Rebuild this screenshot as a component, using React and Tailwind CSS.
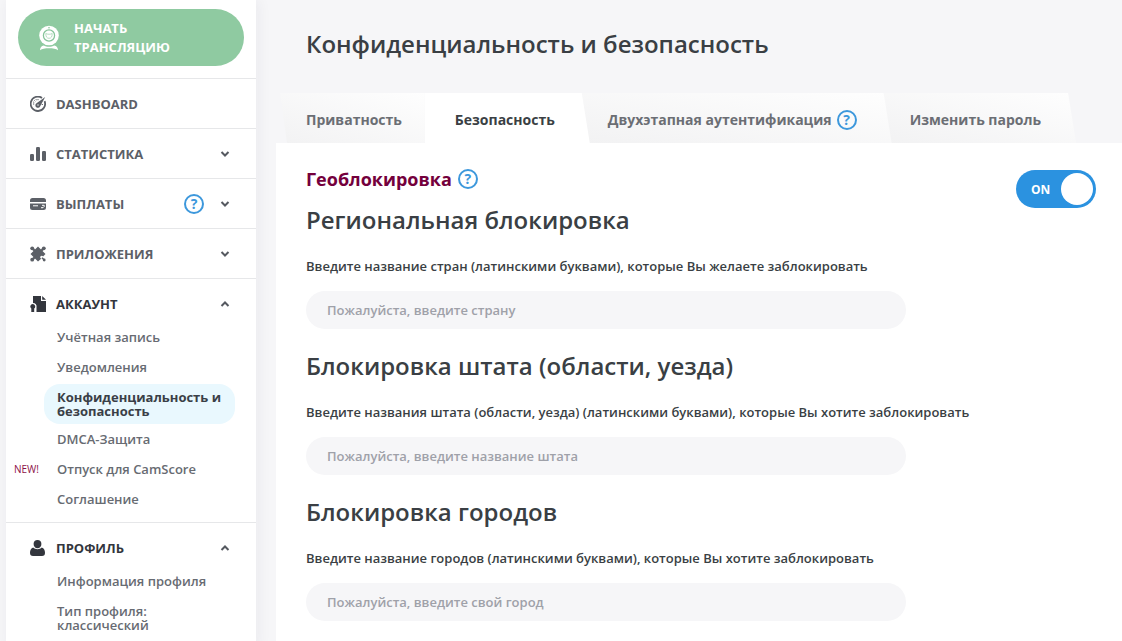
import { useState } from "react";
import clsx from "clsx";

/* ================= ICONS ================= */

const CameraIcon = () => (
  <svg viewBox="0 0 20 26" className="w-5 h-[26px] shrink-0" fill="none" aria-hidden="true">
    <circle cx="10" cy="10.500" r="9.800" fill="#fff" />
    <circle cx="10" cy="10.500" r="5.600" stroke="#86c49a" strokeWidth="1.300" />
    <path d="M6.800 8.500c1.800 1 4.600 1 6.400 0 0 3.200-1 4.800-3.200 4.800s-3.200-1.600-3.200-4.800z" stroke="#a5d5b4" strokeWidth=".8" />
    <circle cx="10" cy="2.800" r=".8" fill="#86c49a" />
    <path d="M1 25.200c0-2.700 1.500-4.500 3.700-4.800 3 1.900 7.600 1.900 10.600 0 2.200.3 3.700 2.100 3.700 4.800-2-1.500-5-1.900-9-1.900s-7 .4-9 1.900z" fill="#fff" />
  </svg>
);

const DashboardIcon = () => (
  <svg viewBox="0 0 16 16" className="w-4 h-4" fill="none" stroke="currentColor" aria-hidden="true">
    <path d="M12 1.900A7.200 7.200 0 1 0 14.600 5.200" strokeWidth="1.800" />
    <path d="M3 8h1.200M8 3v1.200M4.400 4.400l.9.900M6 3.200l.4 1M3.200 6l1 .4M12.900 8.500h-1.200" strokeWidth="1" />
    <path d="M15.200 1L10.200 10.200a2.500 2.500 0 1 1-3.700-3z" fill="currentColor" stroke="none" />
    <circle cx="8" cy="9" r=".7" fill="#fff" stroke="none" />
  </svg>
);

const StatsIcon = () => (
  <svg viewBox="0 0 16 16" className="w-4 h-4" fill="currentColor" aria-hidden="true">
    <rect x="0" y="8" width="4" height="7" rx="1.200" />
    <rect x="6" y="1" width="4" height="14" rx="1.200" />
    <rect x="12" y="5" width="4" height="10" rx="1.200" />
  </svg>
);

const PayoutIcon = () => (
  <svg viewBox="0 0 16 16" className="w-4 h-4" aria-hidden="true">
    <path d="M2.500 2h11A2.500 2.500 0 0 1 16 4.500V6H0V4.500A2.500 2.500 0 0 1 2.500 2zM0 7.500h16v4a2.500 2.500 0 0 1-2.500 2.500h-11A2.500 2.500 0 0 1 0 11.500z" fill="currentColor" />
    <path d="M3 9.800h5M12 9.300h2.200v1.200l-1.200 1.200h-2" fill="none" stroke="#fff" strokeWidth="1" />
  </svg>
);

const AppsIcon = () => (
  <svg viewBox="0 0 16 16" className="w-4 h-4" fill="currentColor" aria-hidden="true">
    <path d="M8 .5L15.500 8l-2.400 2.400c-.6-1-2.200-1-2.700 0-.5.900-.2 1.900.8 2.300L8 15.500.5 8z" />
    <circle cx="2.200" cy="2.300" r="1.900" />
    <circle cx="13.800" cy="2.300" r="1.900" />
    <circle cx="2.200" cy="13.700" r="1.900" />
    <path d="M2 2l4 4M14 2l-4 4M2 14l4-4" stroke="currentColor" strokeWidth="2.400" />
    <circle cx="14.200" cy="14" r="1.400" />
    <path d="M12 11.800l2 2" stroke="currentColor" strokeWidth="1.600" />
  </svg>
);

const AccountIcon = () => (
  <svg viewBox="0 0 16 16" className="w-4 h-4" fill="currentColor" aria-hidden="true">
    <path d="M3 0h8v5h5v11H6.500v-4.600A3.600 3.600 0 0 0 3 6.900z" />
    <path d="M12.200 0L16 3.800h-3.800z" />
    <path d="M2.700 8a2.500 2.500 0 0 1 1.500 4.500V16H1.300v-3.500A2.500 2.500 0 0 1 2.700 8z" />
  </svg>
);

const ProfileIcon = () => (
  <svg viewBox="0 0 16 16" className="w-4 h-4" fill="currentColor" aria-hidden="true">
    <path d="M7.500 0c2.400 0 3.900 1.500 3.900 3.900S9.800 8.200 7.500 8.200 3.600 6.300 3.600 3.900 5.100 0 7.500 0z" />
    <path d="M3.200 7.600c2 2.200 6.600 2.200 8.600 0C14 8.400 15 10.300 15 12.800c0 2.200-1 3.200-3 3.200H3c-2 0-3-1-3-3.200 0-2.500 1-4.400 3.200-5.200z" />
  </svg>
);

const Chevron = ({ up }) => (
  <svg
    viewBox="0 0 10 10"
    className={clsx("w-2.5 h-2.5 text-[#555960]", up && "rotate-180")}
    fill="none"
    stroke="currentColor"
    strokeWidth="2"
    aria-hidden="true"
  >
    <path d="M1.500 3L5 6.500 8.500 3" />
  </svg>
);

const Help = () => (
  <span className="flex items-center justify-center w-5 h-5 shrink-0 rounded-full border-2 border-[#3d98dc] text-[#3d98dc] text-sm leading-none font-bold">
    ?
  </span>
);

/* ================= DATA ================= */

const menu = [
  { title: "DASHBOARD", icon: DashboardIcon },
  { title: "СТАТИСТИКА", icon: StatsIcon, expandable: true },
  { title: "ВЫПЛАТЫ", icon: PayoutIcon, expandable: true, help: true },
  { title: "ПРИЛОЖЕНИЯ", icon: AppsIcon, expandable: true },
  {
    title: "АККАУНТ",
    icon: AccountIcon,
    expandable: true,
    links: [
      { label: "Учётная запись" },
      { label: "Уведомления" },
      { label: "Конфиденциальность и безопасность", active: true },
      { label: "DMCA-Защита" },
      { label: "Отпуск для CamScore", isNew: true },
      { label: "Соглашение" }
    ]
  },
  {
    title: "ПРОФИЛЬ",
    icon: ProfileIcon,
    expandable: true,
    links: [
      { label: "Информация профиля" },
      { label: "Тип профиля: классический" }
    ]
  }
];

const fields = [
  {
    id: "country",
    title: "Региональная блокировка",
    label: "Введите название стран (латинскими буквами), которые Вы желаете заблокировать",
    placeholder: "Пожалуйста, введите страну"
  },
  {
    id: "state",
    title: "Блокировка штата (области, уезда)",
    label: "Введите названия штата (области, уезда) (латинскими буквами), которые Вы хотите заблокировать",
    placeholder: "Пожалуйста, введите название штата"
  },
  {
    id: "city",
    title: "Блокировка городов",
    label: "Введите название городов (латинскими буквами), которые Вы хотите заблокировать",
    placeholder: "Пожалуйста, введите свой город"
  }
];

const tabs = [
  { label: "Приватность", className: "pl-[30px] pr-[23px] [clip-path:polygon(4px_0,100%_0,100%_100%,11px_100%)]" },
  { label: "Безопасность", className: "z-30 pl-[30px] pr-[35px] [clip-path:polygon(0_0,calc(100%-8px)_0,100%_100%,0_100%)]" },
  { label: "Двухэтапная аутентификация", help: true, className: "z-20 -ml-2 pl-[26px] pr-[35px] [clip-path:polygon(0_0,calc(100%-8px)_0,100%_100%,0_100%)]" },
  { label: "Изменить пароль", className: "z-10 -ml-2 pl-[26px] pr-[35px] [clip-path:polygon(0_0,calc(100%-8px)_0,100%_100%,0_100%)]" }
];

/* ================= SIDEBAR ================= */

const MenuSection = ({ item }) => {
  const Icon = item.icon;
  const open = Boolean(item.links);

  return (
    <li className={clsx("border-t border-[#e6e7e9]", open && "pb-2")}>

      <button
        type="button"
        aria-expanded={item.expandable ? open : undefined}
        className={clsx(
          "flex items-center w-full pl-6 pr-[26px] text-[13px] font-bold",
          open ? "h-[43px] pt-[7px] text-[#33363d]" : "h-[49px] pt-px text-[#5c6067]"
        )}
      >
        <Icon />
        <span className="ml-2.5 mr-auto pt-0.5">{item.title}</span>
        {item.help && <span className="mr-4"><Help /></span>}
        {item.expandable && <Chevron up={open} />}
      </button>

      {open && (
        <ul>
          {item.links.map((link) => (
            <li key={link.label} className="flex items-center text-[13px] leading-[14px]">
              <span className="w-[38px] pl-2 text-[10px] text-[#8c1147]">
                {link.isNew && "NEW!"}
              </span>
              <a
                href="#"
                aria-current={link.active ? "page" : undefined}
                className={clsx(
                  "w-[191px] pl-[13px] rounded-2xl",
                  link.active
                    ? "mt-0.5 py-1.5 bg-[#e9f8fe] font-bold text-[#3a3f47]"
                    : "py-2 pr-5 font-semibold text-[#676b72]"
                )}
              >
                {link.label}
              </a>
            </li>
          ))}
        </ul>
      )}

    </li>
  );
};

const Sidebar = () => (
  <aside className="w-[250px] ml-1.5 mr-5 shrink-0 bg-white shadow-[2px_0_14px_rgba(40,40,60,0.06)]">

    <div className="px-3 pt-[9px] pb-3">
      <button
        type="button"
        className="flex items-center gap-[15px] w-full h-[57px] pl-[21px] rounded-full bg-[#8fcaa1] text-white text-left text-[13px] leading-[19px] font-bold"
      >
        <CameraIcon />
        <span className="w-28">НАЧАТЬ ТРАНСЛЯЦИЮ</span>
      </button>
    </div>

    <nav>
      <ul>
        {menu.map((item) => (
          <MenuSection key={item.title} item={item} />
        ))}
      </ul>
    </nav>

  </aside>
);

/* ================= CONTENT ================= */

const Toggle = ({ checked, onChange }) => (
  <label
    className={clsx(
      "flex items-center justify-between w-20 h-[38px] mt-[3px] pl-[15px] pr-[3px] shrink-0 rounded-full cursor-pointer",
      checked ? "bg-[#2b92e0]" : "bg-gray-400"
    )}
  >
    <input
      type="checkbox"
      role="switch"
      aria-label="Геоблокировка"
      className="sr-only"
      checked={checked}
      onChange={(e) => onChange(e.target.checked)}
    />
    <span className="pt-px text-xs font-bold text-white">{checked ? "ON" : "OFF"}</span>
    <span className="w-8 h-8 rounded-full bg-white" />
  </label>
);

const App = () => {

  const [activeTab, setActiveTab] = useState("Безопасность");
  const [enabled, setEnabled] = useState(true);
  const [form, setForm] = useState({ country: "", state: "", city: "" });

  return (
    <div className="flex min-h-screen bg-[#f6f6f8] font-['Open_Sans',sans-serif] text-[#3a3f44]">

      <Sidebar />

      <main className="flex flex-col flex-1 min-w-0">

        <h1 className="pt-7 pb-[33px] pl-[30px] text-2xl leading-8 font-semibold">
          Конфиденциальность и безопасность
        </h1>

        {/* TABS */}

        <div role="tablist" className="flex h-[50px]">
          {tabs.map((tab) => (
            <button
              key={tab.label}
              type="button"
              role="tab"
              aria-selected={activeTab === tab.label}
              onClick={() => setActiveTab(tab.label)}
              className={clsx(
                "relative flex items-center gap-[5px] pt-1 text-sm font-bold whitespace-nowrap",
                activeTab === tab.label
                  ? "bg-white text-[#3a3f44]"
                  : "bg-linear-to-tr from-[#f2f2f3] to-[#fefefe] text-[#6b6e74]",
                tab.className
              )}
            >
              {tab.label}
              {tab.help && <Help />}
            </button>
          ))}
        </div>

        {/* PANEL */}

        <div role="tabpanel" className="flex items-start flex-1 pt-6 pl-[30px] pr-[26px] bg-white">

          <div className="flex-1 min-w-0">

            <div className="flex items-center gap-1.5 mb-[13px]">
              <h2 className="text-lg leading-6 font-bold text-[#74003c]">Геоблокировка</h2>
              <Help />
            </div>

            {fields.map((field) => (
              <section key={field.id} className="mb-[21px] last:mb-0">

                <h3 className="text-2xl leading-8 font-semibold">{field.title}</h3>

                <label htmlFor={field.id} className="block mt-5 mb-[15px] text-[13px] leading-5 font-semibold">
                  {field.label}
                </label>

                <input
                  id={field.id}
                  type="text"
                  placeholder={field.placeholder}
                  value={form[field.id]}
                  onChange={(e) => setForm({ ...form, [field.id]: e.target.value })}
                  className="block w-full max-w-[600px] h-[38px] px-[21px] rounded-full bg-[#f6f6f8] text-[13px] font-semibold placeholder:text-[#9fa1a9]"
                />

              </section>
            ))}

          </div>

          <Toggle checked={enabled} onChange={setEnabled} />

        </div>

      </main>

    </div>
  );
};

export default App;
